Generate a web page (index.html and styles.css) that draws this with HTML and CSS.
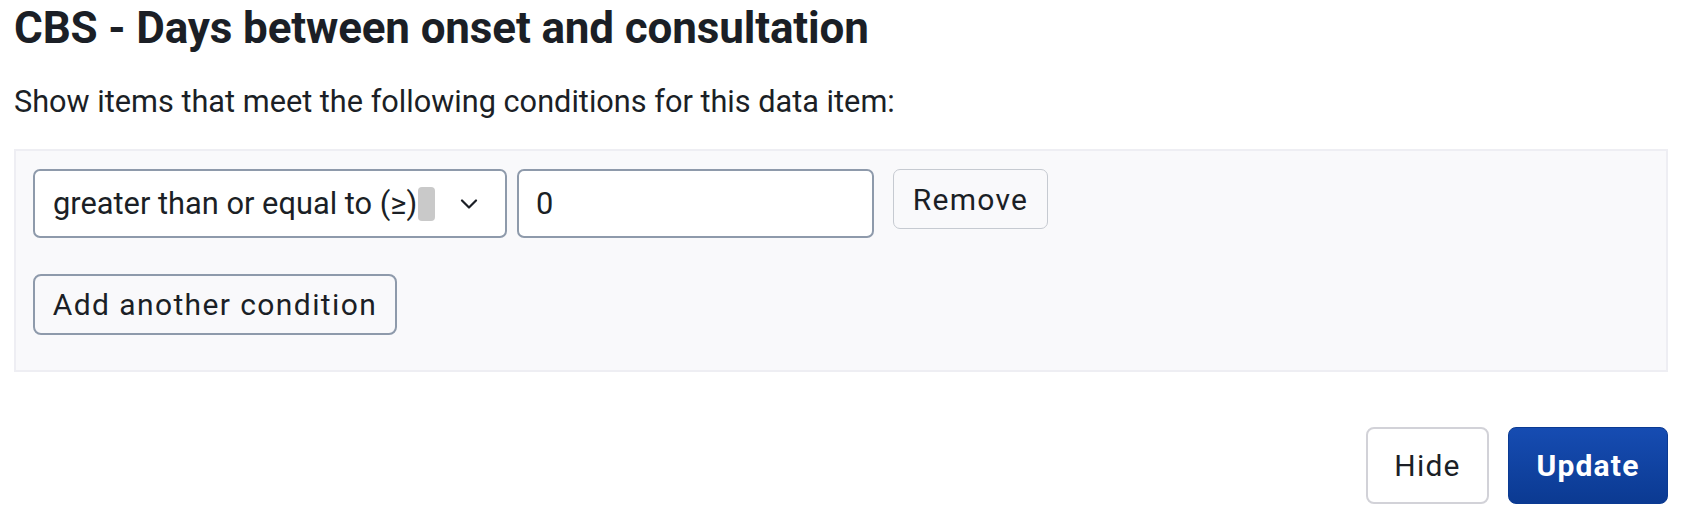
FILE: index.html
```html
<!DOCTYPE html>
<html lang="en">
<head>
<meta charset="utf-8">
<title>CBS - Days between onset and consultation</title>
<link rel="stylesheet" href="styles.css">
</head>
<body>
<div class="page">
  <h1 class="title">CBS - Days between onset and consultation</h1>
  <p class="intro">Show items that meet the following conditions for this data item:</p>
  <div class="panel">
    <div class="condition-row">
      <div class="select">
        <span class="select-text">greater than or equal to (≥)<span class="select-mark"></span></span>
        <svg class="chevron" width="18" height="10" viewBox="0 0 18 10" aria-hidden="true"><path d="M2 1.5 L9 8.5 L16 1.5" fill="none" stroke="#1b1f26" stroke-width="2.2" stroke-linecap="round" stroke-linejoin="round"/></svg>
      </div>
      <div class="input">0</div>
      <button class="btn btn-remove">Remove</button>
    </div>
    <div class="add-row">
      <button class="btn btn-add">Add another condition</button>
    </div>
  </div>
  <div class="actions">
    <button class="btn btn-hide">Hide</button>
    <button class="btn btn-update">Update</button>
  </div>
</div>
</body>
</html>
```
FILE: styles.css
```css
* { box-sizing: border-box; }
html, body { margin: 0; padding: 0; background: #ffffff; }
body {
  font-family: Roboto, "Liberation Sans", Arial, sans-serif;
  color: #1b1f26;
}
.page {
  padding: 0 38px 0 14px;
}
.title {
  margin: 0;
  padding-top: 3px;
  font-size: 44px;
  line-height: 50px;
  font-weight: 700;
  letter-spacing: -0.15px;
}
.intro {
  margin: 0;
  padding-top: 31px;
  font-size: 30.7px;
  line-height: 36px;
  font-weight: 400;
}
.panel {
  margin-top: 29px;
  background: #f9f9fb;
  border: 2px solid #eeeef3;
  padding: 18px 17px 35px;
}
.condition-row {
  display: flex;
  align-items: flex-start;
}
.select {
  width: 474px;
  height: 69px;
  background: #ffffff;
  border: 2px solid #8e9aab;
  border-radius: 7px;
  display: flex;
  align-items: center;
  justify-content: space-between;
  padding: 0 27px 0 18px;
  font-size: 30.8px;
}
.select-text {
  display: flex;
  align-items: center;
  white-space: nowrap;
}
.select-mark {
  display: inline-block;
  width: 17px;
  height: 34px;
  background: #c9c9c9;
  border-radius: 4px;
  margin-left: 1px;
}
.chevron { display: block; flex: none; }
.input {
  width: 357px;
  height: 69px;
  margin-left: 10px;
  background: #ffffff;
  border: 2px solid #8e9aab;
  border-radius: 7px;
  display: flex;
  align-items: center;
  padding-left: 17px;
  font-size: 30.8px;
}
.btn {
  font-family: Roboto, "Liberation Sans", Arial, sans-serif;
  color: #1b1f26;
  cursor: pointer;
  margin: 0;
  white-space: nowrap;
}
.btn-remove {
  margin-left: 19px;
  height: 60px;
  width: 155px;
  padding: 0;
  background: #f9f9fb;
  border: 1.5px solid #c6cad1;
  border-radius: 7px;
  font-size: 30px;
  letter-spacing: 1.3px;
}
.add-row {
  margin-top: 36px;
  display: flex;
}
.btn-add {
  height: 61px;
  width: 364px;
  padding: 0;
  background: #f9f9fb;
  border: 2px solid #8e9aab;
  border-radius: 8px;
  font-size: 30px;
  letter-spacing: 1.4px;
}
.actions {
  margin-top: 55px;
  display: flex;
  justify-content: flex-end;
  gap: 19px;
}
.btn-hide {
  height: 77px;
  width: 123px;
  padding: 0;
  background: #ffffff;
  border: 2px solid #d2d2d8;
  border-radius: 8px;
  font-size: 30px;
  letter-spacing: 1.2px;
}
.btn-update {
  height: 77px;
  width: 160px;
  padding: 0;
  background: linear-gradient(#164cb2, #0b3a92);
  border: 1px solid #0b3a92;
  border-radius: 8px;
  color: #ffffff;
  font-size: 30px;
  font-weight: 700;
  letter-spacing: 1.2px;
}
```
